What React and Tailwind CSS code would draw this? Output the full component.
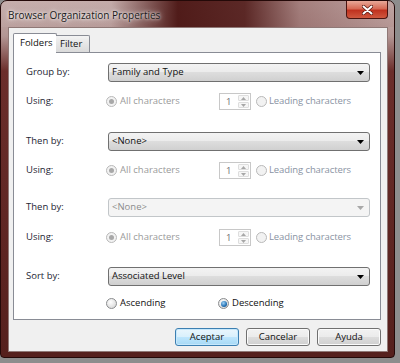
import React from 'react';

// Win7 style "Browser Organization Properties" dialog

function Arrow({ color = '#000' }) {
  return (
    <svg width="7" height="4" viewBox="0 0 7 4">
      <path d="M0 0 H7 L3.5 4 Z" fill={color} />
    </svg>
  );
}

function SpinArrow({ up }) {
  return (
    <svg width="5" height="3" viewBox="0 0 5 3">
      <path d={up ? 'M0 3 H5 L2.5 0 Z' : 'M0 0 H5 L2.5 3 Z'} fill="#a7a7a7" />
    </svg>
  );
}

function Select({ value, disabled, h = 'h-[19px]' }) {
  return (
    <div
      className={
        'w-[262px] rounded-[3px] border flex items-center justify-between pl-[3px] pr-[5px] ' +
        h +
        (disabled
          ? ' border-[#c2c6c9] bg-[#f4f4f4] text-[#8d8d8d]'
          : ' border-[#707070] bg-[linear-gradient(#f3f3f3,#ebebeb_50%,#dddddd_50%,#d0d0d0)] text-[#111]')
      }
    >
      <span>{value}</span>
      <Arrow color={disabled ? '#a8a8a8' : '#000'} />
    </div>
  );
}

function Radio({ checked, disabled }) {
  if (disabled) {
    return (
      <span className="w-[11px] h-[11px] rounded-full border border-[#b9b9b9] bg-[#f2f2f2] flex items-center justify-center shrink-0">
        {checked && <span className="w-[5px] h-[5px] rounded-full bg-[#a8a8a8]" />}
      </span>
    );
  }
  return (
    <span className="w-[11px] h-[11px] rounded-full border border-[#8a8c8e] bg-[radial-gradient(circle_at_40%_35%,#ffffff,#dcdcdc_75%)] flex items-center justify-center shrink-0">
      {checked && (
        <span className="w-[6px] h-[6px] rounded-full bg-[radial-gradient(circle_at_40%_35%,#9fd3f7,#2370b3_60%,#0d3f70)]" />
      )}
    </span>
  );
}

function Spinner() {
  return (
    <div className="w-[32px] h-[17px] border border-[#c8c8c8] bg-white flex shrink-0">
      <span className="flex-1 pl-[6px] text-[#707070] leading-[15px]">1</span>
      <div className="w-[11px] my-px mr-px flex flex-col gap-px">
        <div className="flex-1 flex items-center justify-center border border-[#dedede] rounded-[1px] bg-[#f6f6f6]">
          <SpinArrow up />
        </div>
        <div className="flex-1 flex items-center justify-center border border-[#dedede] rounded-[1px] bg-[#f6f6f6]">
          <SpinArrow />
        </div>
      </div>
    </div>
  );
}

function SelectRow({ label, value, disabled, className }) {
  return (
    <div className={'flex items-center ' + className}>
      <span className="w-[82px] text-[#1d2533]">{label}</span>
      <Select value={value} disabled={disabled} />
    </div>
  );
}

function UsingRow({ className }) {
  return (
    <div className={'flex items-center h-[17px] ' + className}>
      <span className="w-[80px] text-[#1d2533]">Using:</span>
      <div className="w-[113px] flex items-center gap-[3px] text-[#9a9a9a]">
        <Radio checked disabled />
        <span>All characters</span>
      </div>
      <Spinner />
      <div className="ml-[5px] flex items-center gap-[2px] text-[#8a93a3] tracking-[-0.1px]">
        <Radio disabled />
        <span>Leading characters</span>
      </div>
    </div>
  );
}

function Button({ children, primary }) {
  return (
    <button
      className={
        'w-[64px] h-[18px] rounded-[3px] border leading-[16px] text-[#111] ' +
        (primary
          ? 'border-[#3c7fb1] bg-[linear-gradient(#eaf6fd,#d9f0fc_50%,#bee6fd_50%,#a7d9f5)] shadow-[inset_0_0_0_1px_#c6e8fc]'
          : 'border-[#707070] bg-[linear-gradient(#f2f2f2,#ebebeb_50%,#dddddd_50%,#cfcfcf)] shadow-[inset_0_0_0_1px_#fbfbfb]')
      }
    >
      {children}
    </button>
  );
}

export default function App() {
  return (
    <div className="w-[400px] h-[363px] bg-[#8d8d8d] overflow-hidden font-['Open_Sans',sans-serif] text-[9.5px]">
      <div className="w-[395px] h-[358px] rounded-t-[7px] rounded-b-[4px] border border-[#240908] bg-[linear-gradient(180deg,#c6aeac_0px,#b39694_35px,#6b2e2b_70px,#55201d_100%)] flex flex-col">
        {/* title bar */}
        <div className="h-[26px] flex items-start justify-between pl-[7px] pr-[6px] rounded-t-[6px] bg-[linear-gradient(90deg,rgba(200,180,178,0.2)_0%,rgba(180,150,148,0.1)_28%,rgba(74,20,18,0.95)_45%,rgba(80,26,24,0.9)_62%,rgba(130,80,78,0.5)_76%,rgba(170,130,128,0.2)_100%)]">
          <span className="mt-[8px] leading-[12px] text-[10px] text-[#1a1a1a] [text-shadow:0_0_6px_#ffffff,0_0_3px_#ffffff]">
            Browser Organization Properties
          </span>
          <div className="w-[42px] h-[18px] rounded-b-[4px] border border-[#4a1410] border-t-0 bg-[linear-gradient(#e8a898,#d66a55_45%,#c0321f_55%,#d0583f)] flex items-center justify-center">
            <svg width="11" height="10" viewBox="0 0 11 10">
              <path d="M1.5 1.5 L9.5 8.5 M9.5 1.5 L1.5 8.5" stroke="#5a1a12" strokeWidth="3.6" strokeLinecap="round" />
              <path d="M1.5 1.5 L9.5 8.5 M9.5 1.5 L1.5 8.5" stroke="#ffffff" strokeWidth="2" strokeLinecap="round" />
            </svg>
          </div>
        </div>

        {/* client area */}
        <div className="ml-[7px] mr-[6px] mb-[5px] flex-1 bg-[#f0f0f0] border border-[#8f7876]">
          <div className="ml-[4px] w-[368px] pt-[5px]">
            {/* tabs */}
            <div className="relative z-10 h-[19px] flex items-end">
              <div className="h-[20px] w-[44px] -mb-px bg-white border border-b-0 border-[#898c95] rounded-t-[2px] pl-[6px] leading-[18px] text-[#111]">
                Folders
              </div>
              <div className="h-[17px] w-[34px] -ml-px border border-b-0 border-l-0 border-[#898c95] rounded-tr-[2px] bg-[linear-gradient(#f3f3f3,#e6e6e6_50%,#dadada)] pl-[4px] leading-[16px] text-[#111]">
                Filter
              </div>
            </div>

            {/* panel */}
            <div className="h-[268px] bg-white border border-[#898c95] pl-[12px] pt-[10px] flex flex-col">
              <SelectRow label="Group by:" value="Family and Type" />
              <UsingRow className="mt-[11px]" />
              <SelectRow label="Then by:" value="<None>" className="mt-[22px]" />
              <UsingRow className="mt-[11px]" />
              <SelectRow label="Then by:" value="<None>" disabled className="mt-[19px]" />
              <UsingRow className="mt-[12px]" />
              <SelectRow label="Sort by:" value="Associated Level" className="mt-[21px]" />
              <div className="mt-[11px] flex items-center h-[13px]">
                <span className="w-[80px]" />
                <div className="w-[112px] flex items-center gap-[3px] text-[#111]">
                  <Radio />
                  <span>Ascending</span>
                </div>
                <div className="flex items-center gap-[3px] text-[#111]">
                  <Radio checked />
                  <span>Descending</span>
                </div>
              </div>
            </div>

            {/* buttons */}
            <div className="mt-[8px] flex justify-end gap-[7px]">
              <Button primary>Aceptar</Button>
              <Button>Cancelar</Button>
              <Button>Ayuda</Button>
            </div>
          </div>
        </div>
      </div>
    </div>
  );
}
